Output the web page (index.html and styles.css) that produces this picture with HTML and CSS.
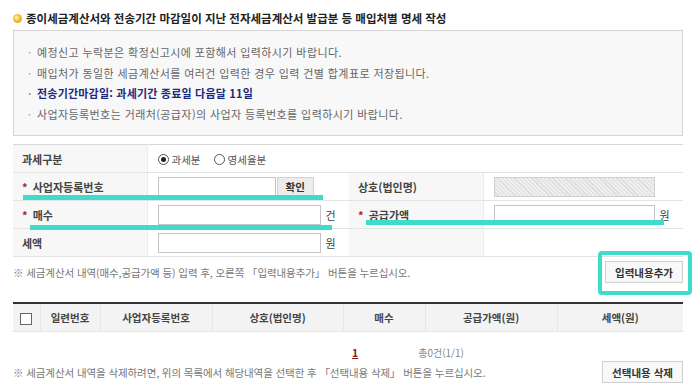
FILE: index.html
```html
<!DOCTYPE html>
<html lang="ko">
<head>
  <meta charset="UTF-8">
  <title>매입처별 명세 작성</title>
  <link rel="stylesheet" href="styles.css">
</head>
<body>
<div class="page">
  <h2 class="tit"><span class="dot"></span>종이세금계산서와 전송기간 마감일이 지난 전자세금계산서 발급분 등 매입처별 명세 작성</h2>

  <div class="notice">
    <ul>
      <li>예정신고 누락분은 확정신고시에 포함해서 입력하시기 바랍니다.</li>
      <li>매입처가 동일한 세금계산서를 여러건 입력한 경우 입력 건별 합계표로 저장됩니다.</li>
      <li class="em">전송기간마감일: 과세기간 종료일 다음달 11일</li>
      <li>사업자등록번호는 거래처(공급자)의 사업자 등록번호를 입력하시기 바랍니다.</li>
    </ul>
  </div>

  <table class="form">
    <colgroup>
      <col class="c-th1"><col class="c-td1"><col class="c-th2"><col class="c-td2">
    </colgroup>
    <tr>
      <th>과세구분</th>
      <td colspan="3">
        <span class="radio on"></span><span class="rlabel">과세분</span>
        <span class="radio"></span><span class="rlabel">영세율분</span>
      </td>
    </tr>
    <tr>
      <th><em>*</em> 사업자등록번호</th>
      <td><input type="text" class="inp w-reg"><button class="btn-chk">확인</button></td>
      <th>상호(법인명)</th>
      <td><input type="text" class="inp w-amt hatch" disabled></td>
    </tr>
    <tr>
      <th><em>*</em> 매수</th>
      <td><input type="text" class="inp w-cnt"><span class="unit">건</span></td>
      <th><em>*</em> 공급가액</th>
      <td><input type="text" class="inp w-amt"><span class="unit">원</span></td>
    </tr>
    <tr>
      <th>세액</th>
      <td><input type="text" class="inp w-cnt"><span class="unit">원</span></td>
      <th></th>
      <td></td>
    </tr>
  </table>

  <div class="bar add">
    <p class="note">※ 세금계산서 내역(매수,공급가액 등) 입력 후, 오른쪽 「입력내용추가」 버튼을 누르십시오.</p>
    <button class="btn">입력내용추가</button>
  </div>

  <table class="list">
    <colgroup>
      <col class="l1"><col class="l2"><col class="l3"><col class="l4"><col class="l5"><col class="l6"><col class="l7">
    </colgroup>
    <thead>
      <tr>
        <th><span class="chk"></span></th>
        <th>일련번호</th>
        <th>사업자등록번호</th>
        <th>상호(법인명)</th>
        <th>매수</th>
        <th>공급가액(원)</th>
        <th>세액(원)</th>
      </tr>
    </thead>
  </table>

  <div class="paging">
    <a class="cur">1</a>
    <span class="total">총0건(1/1)</span>
  </div>

  <div class="bar del">
    <p class="note">※ 세금계산서 내역을 삭제하려면, 위의 목록에서 해당내역을 선택한 후 「선택내용 삭제」 버튼을 누르십시오.</p>
    <button class="btn">선택내용 삭제</button>
  </div>

  <!-- 표시용 형광 표시 -->
  <span class="mark line1"></span>
  <span class="mark line2"></span>
  <span class="mark line3"></span>
  <span class="mark box"></span>
</div>
</body>
</html>
```

FILE: styles.css
```css
body {
  margin: 0;
  font-family: "Noto Sans CJK KR", sans-serif;
  color: #333;
  background: #fff;
}

.page {
  position: relative;
  padding: 9px 17px 0 13px;
}

.tit {
  margin: 0;
  height: 18px;
  display: flex;
  align-items: center;
  gap: 4px;
  font-size: 11.5px;
  font-weight: bold;
  color: #222;
}

.dot {
  width: 9px;
  height: 9px;
  border-radius: 50%;
  background: radial-gradient(circle at 40% 40%, #fff4c8 0, #f6c23a 40%, #d98a10 100%);
}

.notice {
  margin-top: 3px;
  border: 1px solid #d6d6d6;
  background: #f8f8f8;
  padding: 11px 14px;
}

.notice ul {
  margin: 0;
  padding: 0;
  list-style: none;
}

.notice li {
  line-height: 20.5px;
  font-size: 11px;
  letter-spacing: 0.4px;
  color: #666;
  padding-left: 9px;
  position: relative;
}

.notice li:before {
  content: "·";
  position: absolute;
  left: 0;
  color: #999;
}

.notice li.em {
  color: #1c2a7c;
  font-weight: bold;
  letter-spacing: 0.2px;
}

table {
  width: 100%;
  border-collapse: collapse;
  table-layout: fixed;
}

.form {
  margin-top: 8px;
  border-top: 1px solid #d8d8d8;
}

.c-th1 { width: 134px; }
.c-td1 { width: 202px; }
.c-th2 { width: 134px; }
.c-td2 { width: 200px; }

.form th,
.form td {
  height: 27px;
  border-bottom: 1px solid #e3e3e3;
  padding: 0;
  font-size: 11px;
  white-space: nowrap;
}

.form th {
  background: #f7f7f7;
  text-align: left;
  padding-left: 9px;
  font-weight: bold;
  color: #444;
  border-right: 1px solid #ececec;
}

.form td {
  padding-left: 10px;
}

.form th em {
  font-style: normal;
  color: #a3262c;
  margin-right: 2px;
}

.radio {
  display: inline-block;
  width: 9px;
  height: 9px;
  border: 1px solid #555;
  border-radius: 50%;
  vertical-align: -1px;
  position: relative;
}

.radio.on:after {
  content: "";
  position: absolute;
  left: 2px;
  top: 2px;
  width: 5px;
  height: 5px;
  border-radius: 50%;
  background: #222;
}

.rlabel {
  margin: 0 10px 0 3px;
  color: #555;
  font-size: 10.5px;
}

.inp {
  height: 20px;
  box-sizing: border-box;
  border: 1px solid #c4c4c4;
  background: #fff;
  vertical-align: middle;
  padding: 0 4px;
}

.w-reg { width: 118px; }
.w-cnt { width: 163px; }
.w-amt { width: 161px; }

.hatch {
  border-color: #cfcfcf;
  background: repeating-linear-gradient(45deg, #eeeeee 0, #eeeeee 2px, #dcdcdc 2px, #dcdcdc 3px);
}

.btn-chk {
  height: 20px;
  margin-left: 1px;
  padding: 0 8px;
  border: 1px solid #d3d3d3;
  background: #ececec;
  font-family: inherit;
  font-size: 10.5px;
  font-weight: bold;
  color: #333;
  vertical-align: middle;
}

.unit {
  margin-left: 5px;
  color: #444;
  vertical-align: middle;
}

.bar {
  display: flex;
  justify-content: space-between;
  align-items: center;
}

.bar.add {
  padding: 4px 0 19px;
}

.note {
  margin: 0;
  font-size: 10.5px;
  color: #777;
  letter-spacing: -0.1px;
}

.btn {
  height: 22px;
  padding: 0 9px;
  border: 1px solid #cfcfcf;
  background: #f8f8f8;
  font-family: inherit;
  font-size: 10.5px;
  font-weight: bold;
  color: #333;
}

.list {
  border-top: 2px solid #333;
}

.l1 { width: 27px; }
.l2 { width: 60px; }
.l3 { width: 112px; }
.l4 { width: 131px; }
.l5 { width: 82px; }
.l6 { width: 132px; }
.l7 { width: 126px; }

.list th {
  height: 27px;
  padding: 0;
  background: #f3f3f3;
  font-size: 10.5px;
  font-weight: bold;
  color: #444;
  border-left: 1px solid #e6e6e6;
  border-bottom: 1px solid #e6e6e6;
}

.list th:first-child {
  border-left: none;
}

.chk {
  display: inline-block;
  width: 10px;
  height: 10px;
  border: 1px solid #666;
  background: #fff;
  vertical-align: middle;
}

.paging {
  margin-top: 13px;
  padding-left: 339px;
  display: flex;
  align-items: center;
  gap: 60px;
  line-height: 16px;
}

.paging .cur {
  font-size: 10.5px;
  font-weight: bold;
  color: #8c1c1c;
  text-decoration: underline;
}

.paging .total {
  font-size: 10px;
  color: #888;
}

.mark {
  position: absolute;
  background: #40dccb;
}

.line1 { left: 23px; top: 195px; width: 300px; height: 5px; }
.line2 { left: 30px; top: 225px; width: 302px; height: 5px; }
.line3 { left: 366px; top: 220px; width: 298px; height: 5px; }

.box {
  left: 598px;
  top: 251px;
  width: 86px;
  height: 36px;
  background: none;
  border: 4px solid #40dccb;
  border-radius: 4px;
}
```
